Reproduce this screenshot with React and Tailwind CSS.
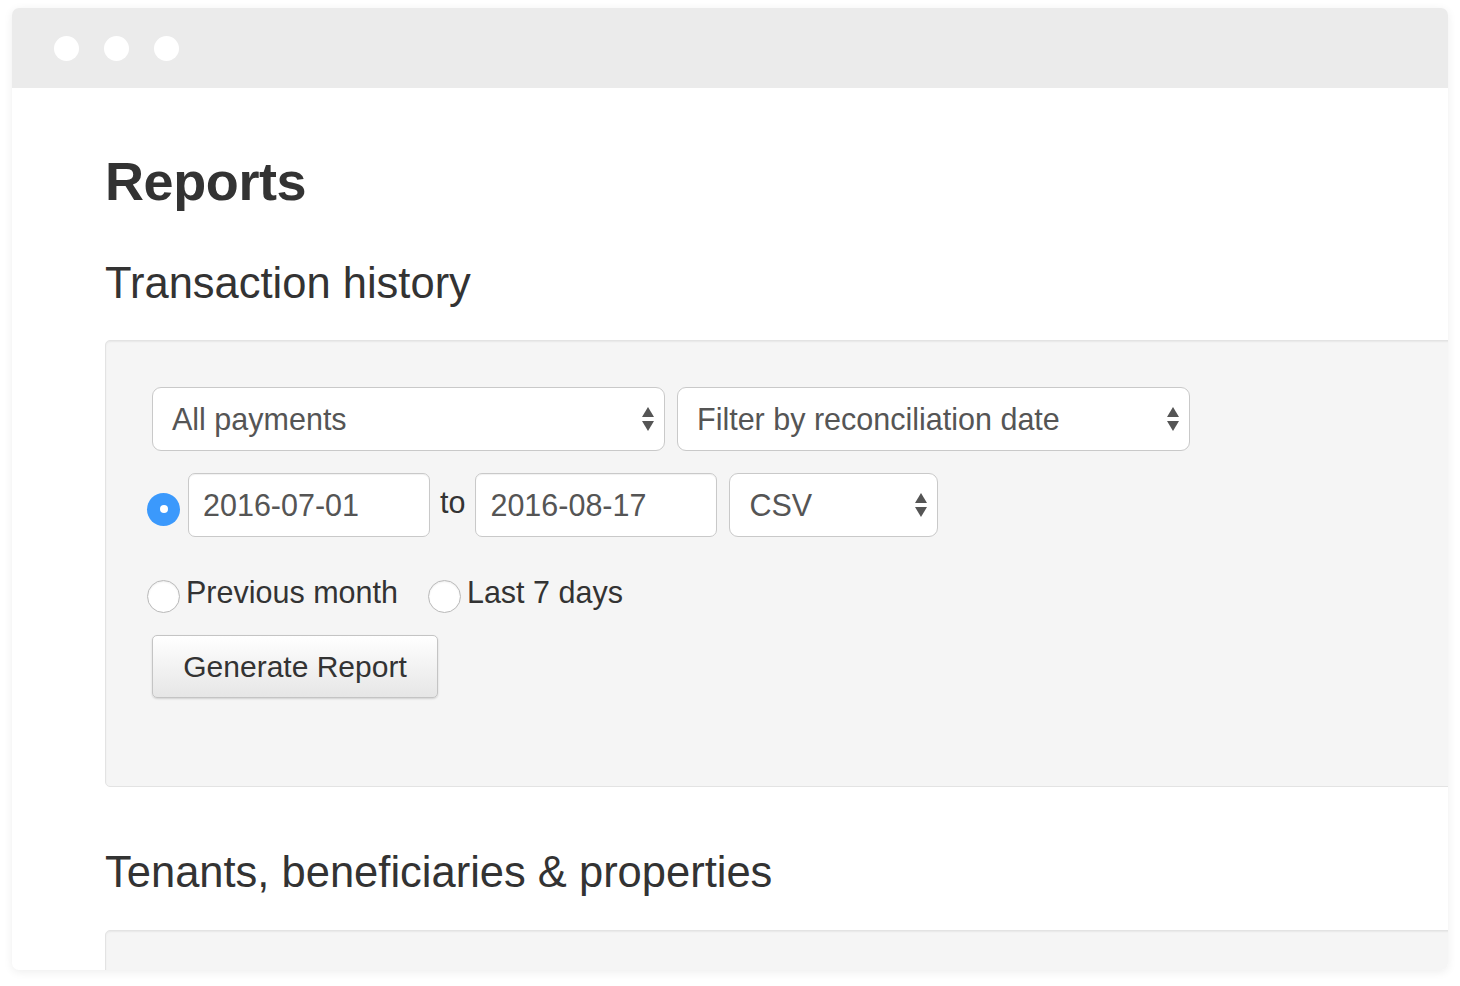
import React from "react";

function Arrows() {
  return (
    <svg width="12" height="25" viewBox="0 0 12 25" className="shrink-0">
      <path d="M6 0 L12 10 L0 10 Z" fill="#555" />
      <path d="M0 14 L12 14 L6 24 Z" fill="#555" />
    </svg>
  );
}

function Select({ label, className }) {
  return (
    <div
      className={
        "h-[64px] bg-white border border-[#c9c9c9] rounded-[9px] flex items-center justify-between pl-[19px] pr-[10px] text-[30.5px] text-[#555] leading-none " +
        className
      }
    >
      <span>{label}</span>
      <Arrows />
    </div>
  );
}

function TextInput({ value }) {
  return (
    <div className="h-[64px] w-[242px] bg-white border border-[#c9c9c9] rounded-[7px] flex items-center pl-[14px] text-[30.5px] text-[#555] leading-none shadow-[inset_0_1px_1px_rgba(0,0,0,0.06)]">
      {value}
    </div>
  );
}

function Radio({ checked }) {
  if (checked) {
    return (
      <div className="w-[33px] h-[33px] rounded-full bg-[#3b99fc] flex items-center justify-center shrink-0">
        <div className="w-[8px] h-[8px] rounded-full bg-white" />
      </div>
    );
  }
  return (
    <div className="w-[33px] h-[33px] rounded-full bg-white border border-[#b9b9b9] shrink-0 shadow-[inset_0_1px_2px_rgba(0,0,0,0.08)]" />
  );
}

export default function App() {
  return (
    <div
      className="w-[1460px] h-[986px] bg-white pl-[12px] pt-[8px] overflow-hidden"
      style={{ fontFamily: '"Liberation Sans", Arial, Helvetica, sans-serif' }}
    >
      <div className="w-[1436px] h-[962px] rounded-[7px] overflow-hidden bg-white shadow-[0_2px_10px_rgba(0,0,0,0.07)] flex flex-col">
        <div className="h-[80px] bg-[#ebebeb] flex items-center pl-[42px] gap-[25px] shrink-0">
          <div className="w-[25px] h-[25px] rounded-full bg-white" />
          <div className="w-[25px] h-[25px] rounded-full bg-white" />
          <div className="w-[25px] h-[25px] rounded-full bg-white" />
        </div>
        <div className="pl-[93px] flex flex-col">
          <h1 className="mt-[64px] text-[54px] leading-[59px] font-bold text-[#333] tracking-[-0.4px]">
            Reports
          </h1>
          <h2 className="mt-[48px] text-[43.5px] leading-[48px] text-[#333]">
            Transaction history
          </h2>
          <div className="mt-[33px] w-[1400px] bg-[#f5f5f5] border border-[#e3e3e3] rounded-[5px] shadow-[inset_0_1px_2px_rgba(0,0,0,0.06)] pt-[46px] pl-[46px] pb-[88px] flex flex-col">
            <div className="flex gap-[12px]">
              <Select label="All payments" className="w-[513px]" />
              <Select label="Filter by reconciliation date" className="w-[513px]" />
            </div>
            <div className="flex items-center mt-[22px] -ml-[5px]">
              <div className="mt-[8px] mr-[8px]">
                <Radio checked />
              </div>
              <TextInput value="2016-07-01" />
              <span className="mx-[10px] text-[30.5px] text-[#333] leading-none -mt-[6px]">to</span>
              <TextInput value="2016-08-17" />
              <Select label="CSV" className="w-[209px] ml-[12px]" />
            </div>
            <div className="flex items-start mt-[37px] -ml-[5px] text-[30.5px] leading-[36px] text-[#333]">
              <div className="mt-[6px]">
                <Radio />
              </div>
              <span className="ml-[6px]">Previous month</span>
              <div className="mt-[6px] ml-[30px]">
                <Radio />
              </div>
              <span className="ml-[6px]">Last 7 days</span>
            </div>
            <div className="mt-[22px]">
              <button className="h-[63px] w-[286px] rounded-[5px] border border-[#c4c4c4] bg-gradient-to-b from-white to-[#e6e6e6] shadow-[0_1px_2px_rgba(0,0,0,0.15)] text-[30px] text-[#333] leading-none flex items-center justify-center">
                Generate Report
              </button>
            </div>
          </div>
          <h2 className="mt-[61px] text-[43.5px] leading-[48px] text-[#333]">
            Tenants, beneficiaries &amp; properties
          </h2>
          <div className="mt-[34px] w-[1400px] h-[200px] bg-[#f5f5f5] border border-[#e3e3e3] rounded-[5px] shadow-[inset_0_1px_2px_rgba(0,0,0,0.06)]" />
        </div>
      </div>
    </div>
  );
}
